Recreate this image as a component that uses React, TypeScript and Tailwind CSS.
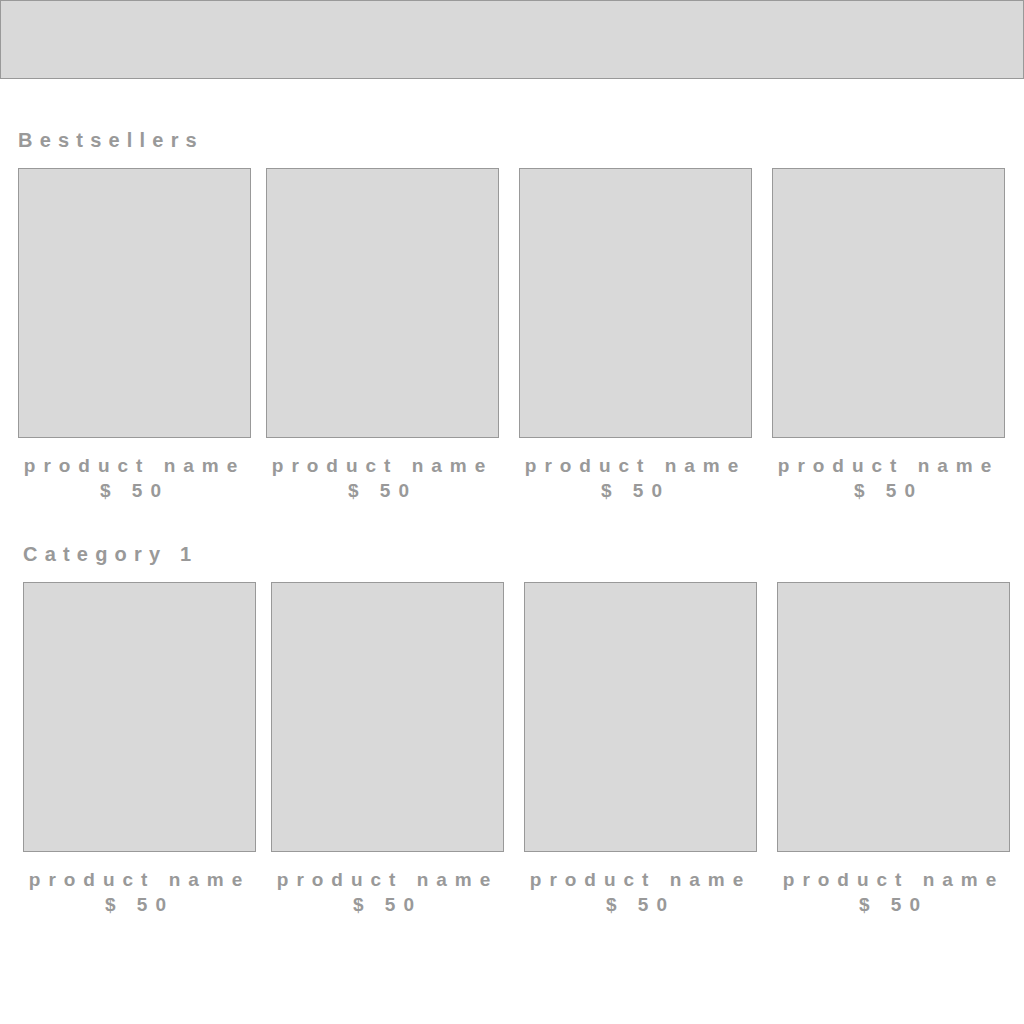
import React from "react";

const font = { fontFamily: '"Liberation Sans", Arial, sans-serif' };

function Card({ ml }: { ml: string }) {
  return (
    <div className={`flex w-[233px] shrink-0 flex-col items-center ${ml}`}>
      <div className="h-[270px] w-[233px] border border-[#999999] bg-[#d9d9d9]" />
      <div className="mt-[16px] flex flex-col items-center text-[19px] font-bold leading-[24px] tracking-[0.42em] text-[#999999]">
        <span>product name</span>
        <span className="mt-[1px]">$ 50</span>
      </div>
    </div>
  );
}

function Section({ title, pl, mt }: { title: string; pl: string; mt: string }) {
  return (
    <section className={`${pl} ${mt}`}>
      <h2 className="text-[20px] font-bold leading-[24px] tracking-[0.36em] text-[#999999]">{title}</h2>
      <div className="mt-[16px] flex">
        <Card ml="" />
        <Card ml="ml-[15px]" />
        <Card ml="ml-[20px]" />
        <Card ml="ml-[20px]" />
      </div>
    </section>
  );
}

export default function App() {
  return (
    <div className="h-[1024px] w-[1024px] overflow-hidden bg-white" style={font}>
      <div className="h-[79px] w-[1024px] border border-[#999999] bg-[#d9d9d9]" />
      <Section title="Bestsellers" pl="pl-[18px]" mt="mt-[49px]" />
      <Section title="Category 1" pl="pl-[23px]" mt="mt-[39px]" />
    </div>
  );
}
